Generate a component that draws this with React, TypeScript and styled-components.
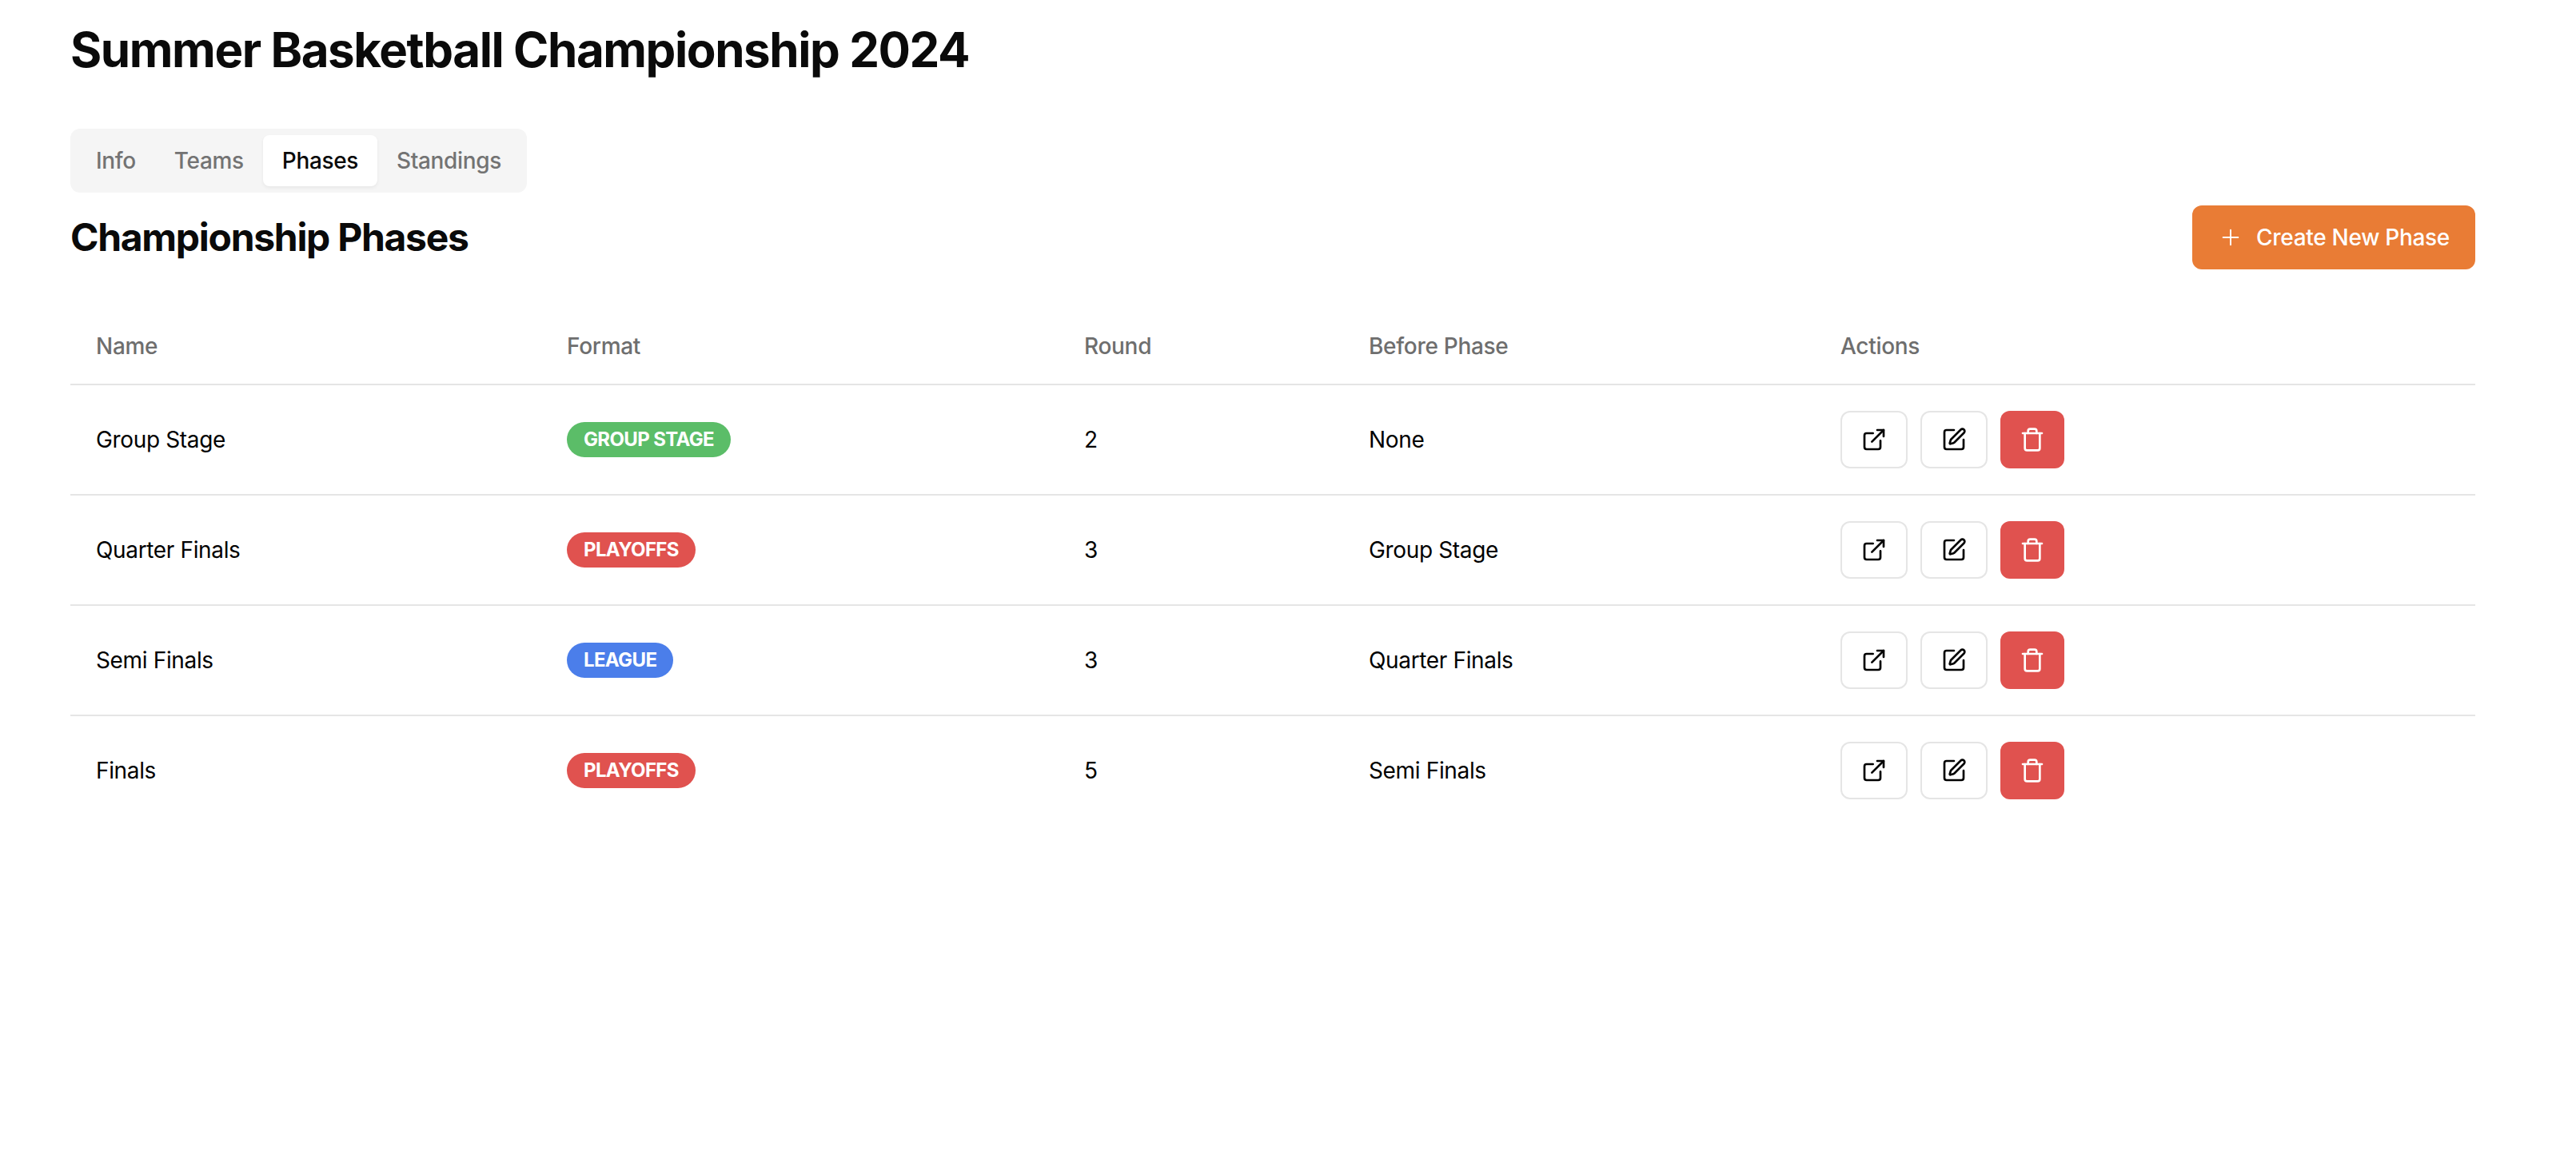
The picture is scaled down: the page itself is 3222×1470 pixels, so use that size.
import { createGlobalStyle, styled } from "styled-components";
import { ExternalLink, Plus, SquarePen, Trash } from "lucide-react";

const GlobalStyle = createGlobalStyle`
  html, body {
    margin: 0;
    background: #fff;
    color: #000;
    font-family: Inter, "Liberation Sans", sans-serif;
  }
`;

const Page = styled.div`
  padding: 26px 126px 0 88px;
  height: 1470px;
  box-sizing: border-box;
`;

const Title = styled.h1`
  margin: 0 0 63px;
  font-size: 60px;
  line-height: 72px;
  font-weight: 700;
  letter-spacing: -1.44px;
  color: #0a0a0a;
`;

const TabList = styled.div`
  display: inline-flex;
  padding: 8px;
  background: #f5f5f5;
  border-radius: 12px;
  vertical-align: top;
`;

const Tab = styled.div<{ $active?: boolean }>`
  height: 64px;
  padding: 0 24px;
  display: flex;
  align-items: center;
  font-size: 28px;
  font-weight: 500;
  letter-spacing: -0.35px;
  border-radius: 8px;
  color: ${(p) => (p.$active ? "#0a0a0a" : "#737373")};
  background: ${(p) => (p.$active ? "#fff" : "transparent")};
  box-shadow: ${(p) => (p.$active ? "0 2px 4px rgba(0,0,0,0.06)" : "none")};
`;

const SectionHeader = styled.div`
  display: flex;
  justify-content: space-between;
  align-items: center;
  margin-top: 16px;
`;

const SectionTitle = styled.h2`
  margin: 0;
  font-size: 48px;
  line-height: 56px;
  font-weight: 700;
  letter-spacing: -1.3px;
  color: #0a0a0a;
`;

const CreateButton = styled.button`
  display: flex;
  align-items: center;
  gap: 16px;
  height: 80px;
  padding: 0 32px;
  border: 0;
  border-radius: 12px;
  background: #e97c35;
  color: #fff;
  font-family: inherit;
  font-size: 28px;
  font-weight: 500;
  letter-spacing: -0.3px;
`;

const Table = styled.table`
  width: 100%;
  margin-top: 48px;
  border-collapse: collapse;
  table-layout: fixed;
`;

const HeadCell = styled.th<{ $width?: number }>`
  width: ${(p) => (p.$width ? `${p.$width}px` : "auto")};
  height: 96px;
  padding: 0 32px;
  box-sizing: border-box;
  text-align: left;
  font-size: 28px;
  font-weight: 500;
  letter-spacing: -0.3px;
  color: #6e6e6e;
  border-bottom: 2px solid #e5e5e5;
`;

const Row = styled.tr`
  border-bottom: 2px solid #e5e5e5;
  &:last-child {
    border-bottom: 0;
  }
`;

const Cell = styled.td`
  height: 136px;
  padding: 0 32px;
  font-size: 28px;
  letter-spacing: -0.35px;
  color: #000;
`;

const Badge = styled.span<{ $color: string }>`
  display: inline-block;
  padding: 0 21px;
  height: 44px;
  line-height: 44px;
  border-radius: 22px;
  font-size: 24px;
  font-weight: 700;
  letter-spacing: -0.65px;
  color: #fff;
  background: ${(p) => p.$color};
  vertical-align: middle;
`;

const Actions = styled.div`
  display: flex;
  gap: 16px;
`;

const IconButton = styled.button`
  display: flex;
  align-items: center;
  justify-content: center;
  width: 84px;
  height: 72px;
  padding: 0;
  box-sizing: border-box;
  background: #fff;
  border: 2px solid #e5e5e5;
  border-radius: 12px;
  color: #000;
`;

const DeleteButton = styled(IconButton)`
  width: 80px;
  background: #e0524f;
  border: 0;
  color: #fff;
`;

const GREEN = "#5bbd68";
const RED = "#e0524f";
const BLUE = "#4b7eea";

const phases = [
  { name: "Group Stage", format: "GROUP STAGE", color: GREEN, round: 2, before: "None" },
  { name: "Quarter Finals", format: "PLAYOFFS", color: RED, round: 3, before: "Group Stage" },
  { name: "Semi Finals", format: "LEAGUE", color: BLUE, round: 3, before: "Quarter Finals" },
  { name: "Finals", format: "PLAYOFFS", color: RED, round: 5, before: "Semi Finals" },
];

export default function App() {
  return (
    <Page>
      <GlobalStyle />
      <Title>Summer Basketball Championship 2024</Title>
      <TabList>
        <Tab>Info</Tab>
        <Tab>Teams</Tab>
        <Tab $active>Phases</Tab>
        <Tab>Standings</Tab>
      </TabList>
      <SectionHeader>
        <SectionTitle>Championship Phases</SectionTitle>
        <CreateButton>
          <Plus size={32} strokeWidth={1.5} />
          Create New Phase
        </CreateButton>
      </SectionHeader>
      <Table>
        <thead>
          <tr>
            <HeadCell $width={589}>Name</HeadCell>
            <HeadCell $width={647}>Format</HeadCell>
            <HeadCell $width={356}>Round</HeadCell>
            <HeadCell $width={590}>Before Phase</HeadCell>
            <HeadCell>Actions</HeadCell>
          </tr>
        </thead>
        <tbody>
          {phases.map((phase) => (
            <Row key={phase.name}>
              <Cell>{phase.name}</Cell>
              <Cell>
                <Badge $color={phase.color}>{phase.format}</Badge>
              </Cell>
              <Cell>{phase.round}</Cell>
              <Cell>{phase.before}</Cell>
              <Cell>
                <Actions>
                  <IconButton>
                    <ExternalLink size={32} />
                  </IconButton>
                  <IconButton>
                    <SquarePen size={32} />
                  </IconButton>
                  <DeleteButton>
                    <Trash size={32} />
                  </DeleteButton>
                </Actions>
              </Cell>
            </Row>
          ))}
        </tbody>
      </Table>
    </Page>
  );
}
